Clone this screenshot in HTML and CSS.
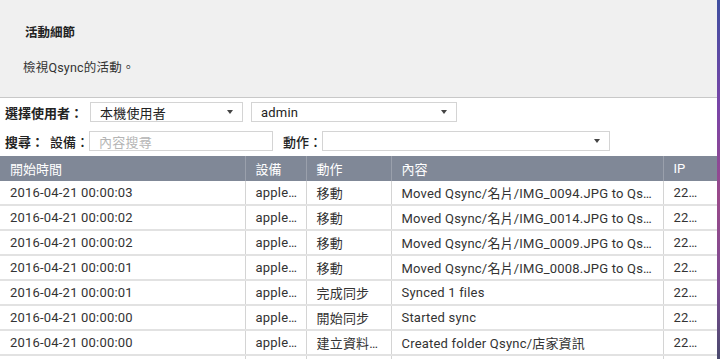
FILE: index.html
```html
<!DOCTYPE html>
<html lang="zh-Hant">
<head>
  <meta charset="UTF-8" />
  <title>活動細節</title>
  <link rel="stylesheet" href="styles.css">
</head>
<body>
  <div class="page">
    <div class="main">
      <div class="head">
        <div class="title">活動細節</div>
        <div class="desc">檢視Qsync的活動。</div>
      </div>

      <div class="filters">
        <div class="line">
          <span class="label">選擇使用者：</span>
          <div class="select sel-type"><span>本機使用者</span><i class="caret"></i></div>
          <div class="select sel-user"><span>admin</span><i class="caret"></i></div>
        </div>
        <div class="line">
          <span class="label">搜尋：</span>
          <span class="label light">設備：</span>
          <div class="input">內容搜尋</div>
          <span class="label light act">動作：</span>
          <div class="select sel-act"><span></span><i class="caret"></i></div>
        </div>
      </div>

      <table class="grid">
        <colgroup>
          <col style="width:245px">
          <col style="width:61px">
          <col style="width:85px">
          <col style="width:272px">
          <col>
        </colgroup>
        <thead>
          <tr><th>開始時間</th><th>設備</th><th>動作</th><th>內容</th><th>IP</th></tr>
        </thead>
        <tbody>
          <tr><td>2016-04-21 00:00:03</td><td>apple…</td><td>移動</td><td>Moved Qsync/名片/IMG_0094.JPG to Qs…</td><td>22…</td></tr>
          <tr><td>2016-04-21 00:00:02</td><td>apple…</td><td>移動</td><td>Moved Qsync/名片/IMG_0014.JPG to Qs…</td><td>22…</td></tr>
          <tr><td>2016-04-21 00:00:02</td><td>apple…</td><td>移動</td><td>Moved Qsync/名片/IMG_0009.JPG to Qs…</td><td>22…</td></tr>
          <tr><td>2016-04-21 00:00:01</td><td>apple…</td><td>移動</td><td>Moved Qsync/名片/IMG_0008.JPG to Qs…</td><td>22…</td></tr>
          <tr><td>2016-04-21 00:00:01</td><td>apple…</td><td>完成同步</td><td>Synced 1 files</td><td>22…</td></tr>
          <tr><td>2016-04-21 00:00:00</td><td>apple…</td><td>開始同步</td><td>Started sync</td><td>22…</td></tr>
          <tr><td>2016-04-21 00:00:00</td><td>apple…</td><td>建立資料…</td><td>Created folder Qsync/店家資訊</td><td>22…</td></tr>
          <tr><td>&nbsp;</td><td></td><td></td><td></td><td></td></tr>
        </tbody>
      </table>
    </div>
    <div class="edge"></div>
  </div>
</body>
</html>
```

FILE: styles.css
```css
body {
  margin: 0;
  font-family: Roboto, "Noto Sans CJK TC", sans-serif;
  font-size: 13px;
  color: #333;
  background: #fff;
}
.page {
  display: flex;
  height: 359px;
  overflow: hidden;
}
.main {
  width: 717px;
  flex: none;
  overflow: hidden;
}
.edge {
  flex: 1;
  background: linear-gradient(#3f4fa0 0%, #7a45a8 30%, #9a4a8a 55%, #7c4b92 80%, #4a4a6e 100%);
}
.head {
  height: 98px;
  background: #f0f0f0;
  border-bottom: 1px solid #c8c8c8;
  box-sizing: border-box;
  padding: 24px 0 0 25px;
}
.title {
  font-size: 12.5px;
  font-weight: bold;
  color: #222;
  line-height: 18px;
}
.desc {
  margin: 17px 0 0 -2px;
  font-size: 12.5px;
  line-height: 18px;
  color: #333;
  letter-spacing: 0.2px;
}
.filters {
  padding: 4px 0 0 5px;
}
.line {
  display: flex;
  align-items: center;
  height: 20px;
  margin-bottom: 9px;
}
.label {
  font-weight: bold;
  color: #222;
}
.label.light {
  margin-left: 6px;
  font-weight: 500;
}
.label.act {
  margin-left: 10px;
}
.select, .input {
  box-sizing: border-box;
  height: 20px;
  border: 1px solid #d4d4d4;
  background: #fff;
  display: flex;
  align-items: center;
  padding: 0 9px 0 9px;
  color: #222;
  letter-spacing: 0.2px;
}
.select span {
  flex: 1;
}
.caret {
  width: 0;
  height: 0;
  border-left: 3.5px solid transparent;
  border-right: 3.5px solid transparent;
  border-top: 4px solid #444;
}
.sel-type {
  width: 153px;
  margin-left: 7px;
}
.sel-user {
  width: 206px;
  margin-left: 8px;
}
.input {
  width: 184px;
  color: #b5b5b5;
  margin-left: 0;
}
.sel-act {
  width: 288px;
  margin-left: 0;
}
.grid {
  width: 717px;
  table-layout: fixed;
  border-collapse: collapse;
  margin-top: -4px;
}
.grid th {
  background: #808897;
  color: #fff;
  font-weight: normal;
  text-align: left;
  height: 25px;
  padding: 0 10px;
  border-left: 1px solid #9aa0ac;
}
.grid td {
  height: 23px;
  padding: 0 10px;
  border-left: 1px solid #d4d4d4;
  border-bottom: 2px solid #e2e2e2;
  white-space: nowrap;
  overflow: hidden;
  letter-spacing: 0.2px;
}
.grid th:first-child, .grid td:first-child {
  border-left: none;
}
```
